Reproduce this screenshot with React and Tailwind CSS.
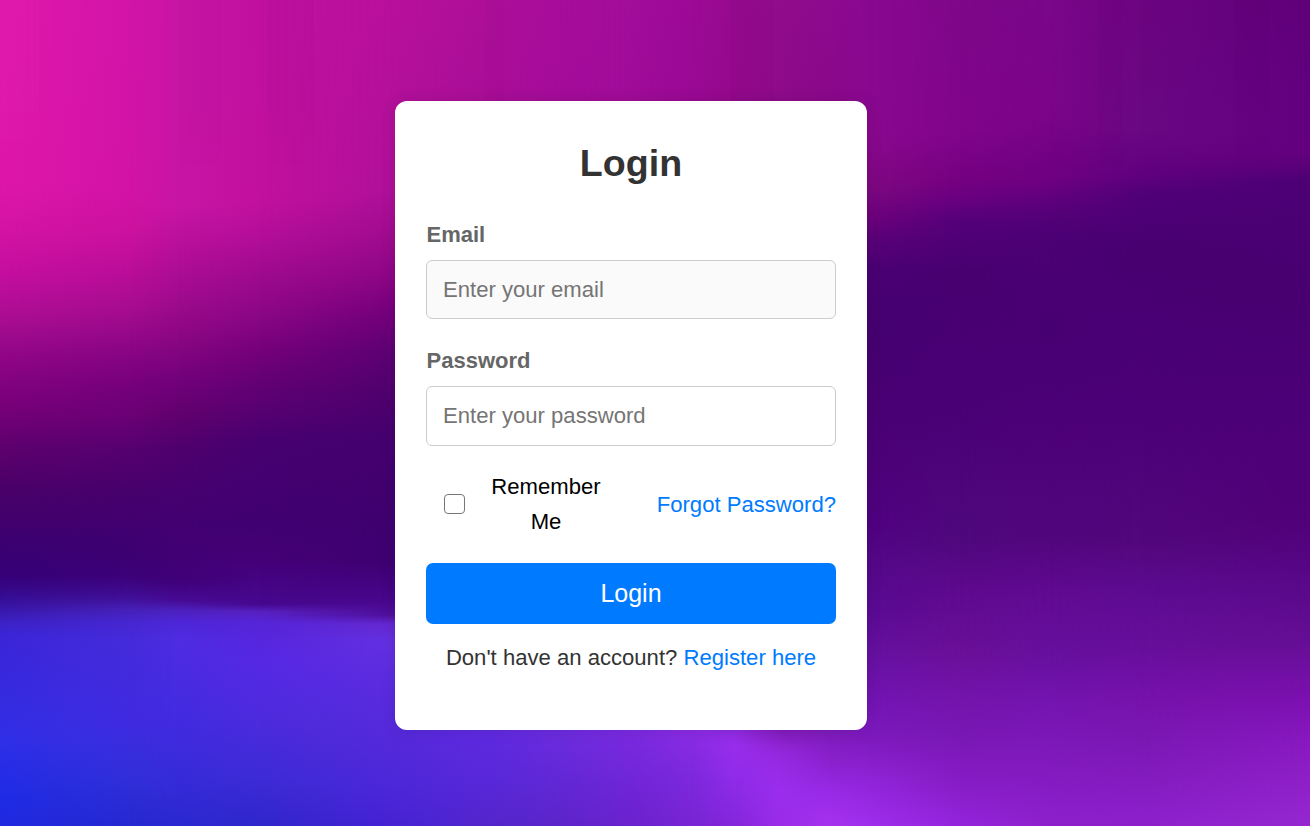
import React from "react";

// Vertical colour ramps of the backdrop; neighbouring ramps are cross-faded.
const ramps = [
  [0, "0 e018ac,180 de17aa,230 d413a4,275 c40e9f,320 a90d92,360 8e0585,413 740078,450 5c006e,490 4a0069,540 3c0070,575 360078,592 350a8c,606 3814a4,622 3c22c4,635 3b25d8,700 352be0,740 2f2fe8,800 1e2be4,826 2029e0"],
  [130, "0 d214a8,190 d213a6,230 cc119f,275 b80d98,310 a60c90,350 8a0585,385 76007c,413 6c0076,450 560070,490 47006c,540 3e0070,575 3c0078,597 400e96,610 4620b8,622 4626d0,640 452bda,720 402be0,780 302fd8,826 2628d0"],
  [178, "0 c915a5,205 c815a5,255 b40e98,305 9c0a8c,350 840580,385 70007a,413 62006e,450 4e006e,520 420070,580 400078,600 460a94,610 4c20bc,622 4e26d8,640 4e2ce2,720 422be0,780 362bd8,826 2a28d0"],
  [260, "0 c010a0,200 c2109e,235 b40e9a,275 9e0a8e,312 8c0786,352 74007a,385 620074,413 560072,440 480070,520 400070,560 440078,604 46088f,612 5820c0,622 5624d8,660 5628e4,720 4c2bdd,780 3c2bd6,826 3026cc"],
  [390, "0 b8109c,190 b0109a,240 9e0b8e,275 8e0686,310 76007c,350 5e0074,390 50006e,440 44006e,500 40006e,560 3e0070,600 48068c,615 50109c,624 6428d0,640 6430e0,680 5c2ce0,740 5429da,780 4d28da,826 4622d4"],
  [490, "0 ad0f98,101 a90e98,730 602ae0,780 5828d8,826 5426cc"],
  [560, "0 a60d9a,101 a40c99,730 6c2cde,780 6228d6,826 5c24ca"],
  [630, "0 a20d99,101 a00c98,730 7a2ae0,780 7026d8,826 6a22ce"],
  [690, "0 9d0a96,101 9a0994,730 8a2ce4,780 7c28dc,826 7824d4"],
  [735, "0 960a8e,101 940a8c,728 8e2ae0,745 982eec,775 902cea,826 8426dc"],
  [780, "0 900c8c,101 8e0b8b,728 801cb8,755 9628e0,790 9a2eee,826 9a2ce8"],
  [830, "0 8e0a8e,101 8a088a,728 7c1ab8,765 8b22d0,795 9a2ae8,826 a632ee"],
  [867, "0 8a0890,140 8a088e,190 7d0880,220 6c007c,240 5a0078,270 4a0074,330 450070,413 4a0074,520 500080,560 540888,610 5a0a94,650 6510a0,700 7314b4,740 7e1abe,780 9024d8,826 a02eee"],
  [960, "0 7e0788,130 80058a,180 750080,200 680080,220 540078,270 480070,413 4a0076,540 50087e,600 600a90,650 6a0f98,700 7414ac,740 7a18b6,780 861cc4,826 9424dc"],
  [1050, "0 7a0688,110 7c0488,180 6e0080,210 580078,235 4c0074,330 480072,413 4c0078,540 52067e,600 620a94,660 6810a0,700 7414b0,740 7c18b8,826 8e20cc"],
  [1140, "0 6d0480,130 6a0882,175 600080,195 500078,250 480070,413 4c0078,540 52077c,600 5e0c94,650 680e9c,700 7612ac,740 7a18b4,826 8e20cc"],
  [1310, "0 5e0078,100 620080,150 640080,165 5c0078,180 4c0074,300 480070,413 4c0078,520 500078,580 580888,640 640e94,700 7c10b0,740 8818c0,826 9628d0"],
];

// Faint compression-like bands running down the top of the backdrop.
const bands = [[0, 39, "#fff"], [177, 44, "#000"], [267, 47, "#000"], [485, 19, "#000"], [730, 44, "#000"], [1098, 25, "#000"], [1235, 34, "#000"]];

function Backdrop() {
  return (
    <svg className="absolute inset-0 h-full w-full" viewBox="0 0 1310 826" preserveAspectRatio="none" aria-hidden="true">
      <defs>
        {ramps.map(([x, stops], i) => {
          const from = i ? ramps[i - 1][0] : 0;
          return (
            <React.Fragment key={x}>
              <linearGradient id={`ramp${i}`} gradientUnits="userSpaceOnUse" x1="0" y1="0" x2="0" y2="826">
                {stops.split(",").map((s) => {
                  const [y, color] = s.split(" ");
                  return <stop key={y} offset={y / 826} stopColor={`#${color}`} />;
                })}
              </linearGradient>
              {i > 0 && (
                <>
                  <linearGradient id={`fade${i}`} gradientUnits="userSpaceOnUse" x1={from} y1="0" x2={x} y2="0">
                    <stop offset="0" stopColor="#fff" stopOpacity="0" />
                    <stop offset="1" stopColor="#fff" />
                  </linearGradient>
                  <mask id={`mask${i}`} maskUnits="userSpaceOnUse" x="0" y="0" width="1310" height="826">
                    <rect x={from} width={1310 - from} height="826" fill={`url(#fade${i})`} />
                  </mask>
                </>
              )}
            </React.Fragment>
          );
        })}
        <linearGradient id="bandFade" x1="0" y1="0" x2="0" y2="1">
          <stop offset="0.55" stopColor="#fff" />
          <stop offset="1" stopColor="#fff" stopOpacity="0" />
        </linearGradient>
        <mask id="bandMask" maskUnits="userSpaceOnUse" x="0" y="0" width="1310" height="180">
          <rect width="1310" height="180" fill="url(#bandFade)" />
        </mask>
      </defs>
      {ramps.map(([x], i) => (
        <rect key={x} width="1310" height="826" fill={`url(#ramp${i})`} mask={i ? `url(#mask${i})` : undefined} />
      ))}
      <g mask="url(#bandMask)">
        {bands.map(([x, w, fill]) => (
          <rect key={x} x={x} width={w} height="180" fill={fill} fillOpacity="0.01" />
        ))}
      </g>
    </svg>
  );
}

function Field({ id, label, type, placeholder, className }) {
  return (
    <div className="flex flex-col">
      <label htmlFor={id} className="mb-2 pl-[0.5px] text-[22px] leading-[35px] font-bold text-[#666]">{label}</label>
      <input
        id={id}
        type={type}
        placeholder={placeholder}
        className={`w-full rounded-[6px] border border-[#ccc] px-4 text-[22.1px] placeholder:text-[#757575] ${className}`}
      />
    </div>
  );
}

export default function App() {
  return (
    <main className="relative flex h-[826px] w-full justify-center overflow-hidden pt-[101px] pr-12 font-['Liberation_Sans',Arial,sans-serif]">
      <Backdrop />
      <form className="relative h-[629px] w-[472px] rounded-[12px] bg-white px-[31px] pt-8 text-[22.1px] leading-[35px] shadow-[0_0_16px_rgba(0,0,0,0.1)]">
        <h1 className="mb-6 text-center text-[37.6px] leading-[60px] font-bold text-[#333]">Login</h1>
        <Field id="email" label="Email" type="email" placeholder="Enter your email" className="h-[59px] bg-[#fafafa]" />
        <div className="h-6" />
        <Field id="password" label="Password" type="password" placeholder="Enter your password" className="h-[60px] bg-white" />
        <div className="mt-[23px] flex items-center justify-between">
          <label className="flex items-center text-center text-black">
            <input type="checkbox" className="mr-[26px] ml-[18px] h-5 w-[21px] appearance-none rounded-[4px] border border-[#767676] bg-white" />
            <span className="w-[110px]">Remember Me</span>
          </label>
          <a href="#" className="text-[#007bff]">Forgot Password?</a>
        </div>
        <button type="button" className="mt-6 h-[61px] w-full rounded-[7px] bg-[#007bff] text-[25px] text-white">Login</button>
        <p className="mt-4 text-center text-[#333]">
          Don't have an account? <a href="#" className="text-[#007bff]">Register here</a>
        </p>
      </form>
    </main>
  );
}
